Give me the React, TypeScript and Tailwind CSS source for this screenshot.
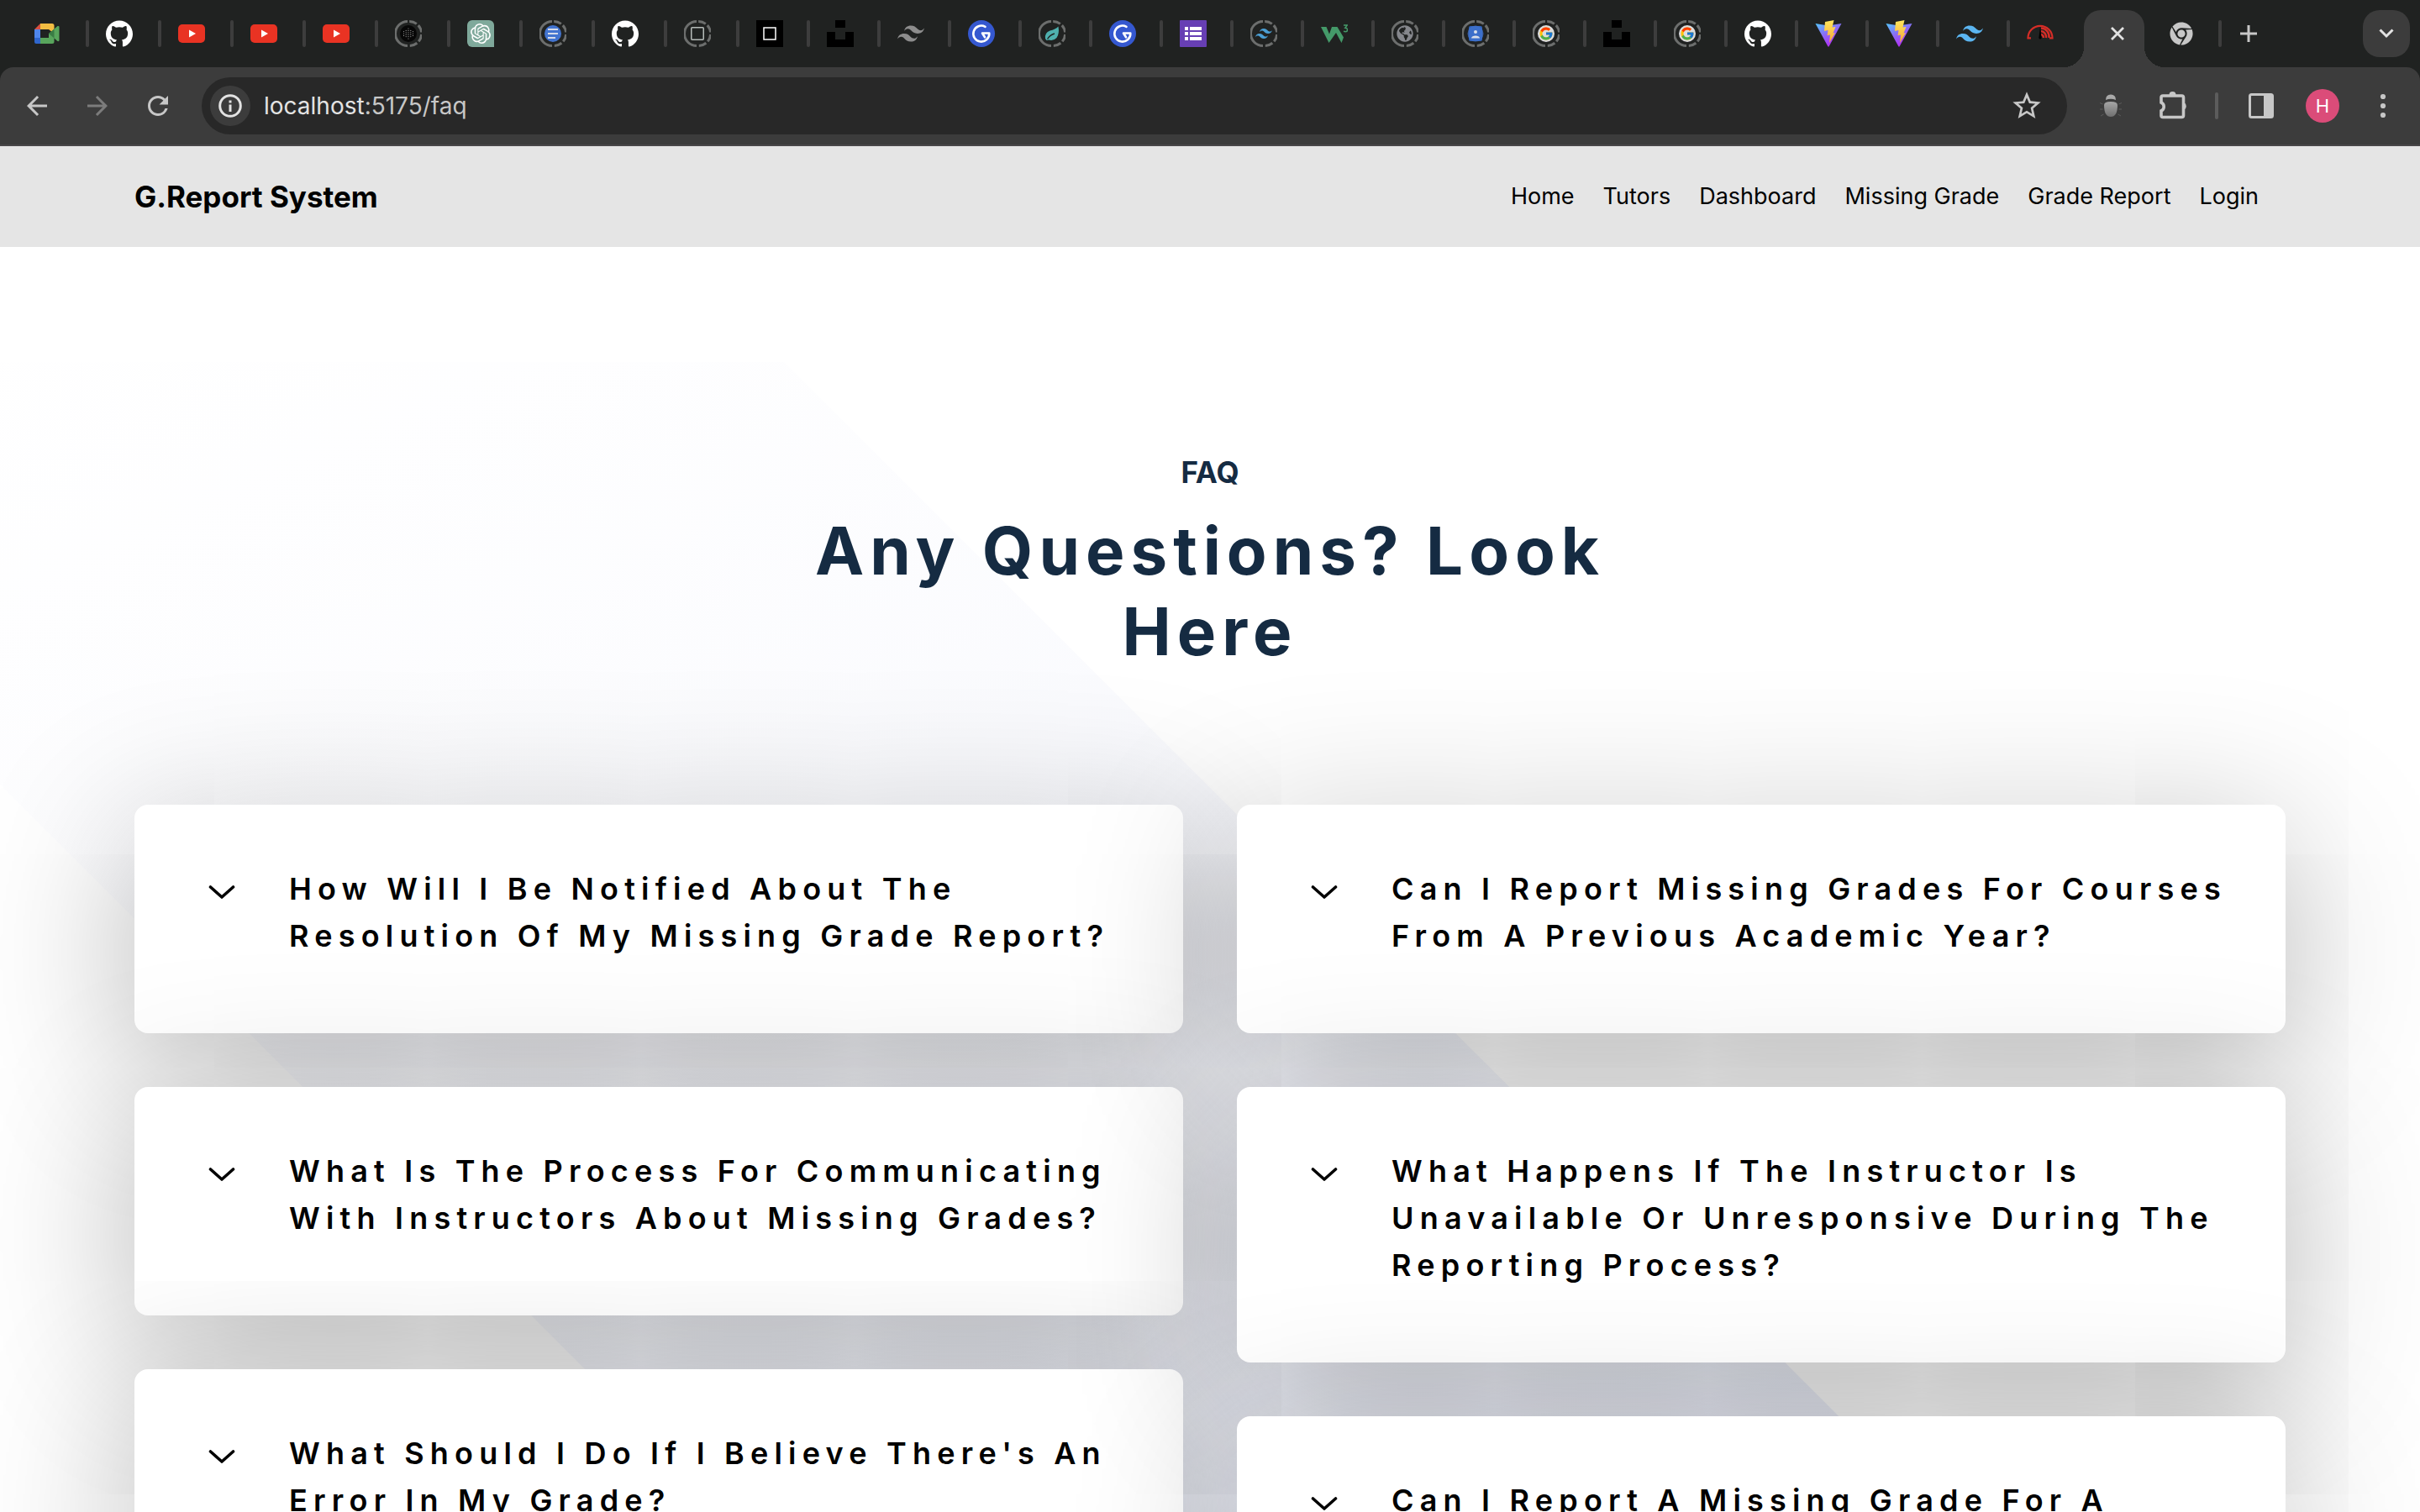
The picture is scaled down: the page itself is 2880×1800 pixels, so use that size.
import { useState } from "react";
import type { ReactNode } from "react";
import { FaChrome, FaGlobeAmericas } from "react-icons/fa";
import { FcGoogle } from "react-icons/fc";
import { MdArrowBack, MdArrowForward, MdRefresh, MdStarBorder } from "react-icons/md";
import { SiGithub, SiOpenai, SiTailwindcss, SiUnsplash } from "react-icons/si";

/* ---------- Favicons ---------- */

function Ring({ children }: { children: ReactNode }) {
  return (
    <span className="relative flex size-8 items-center justify-center">
      <svg viewBox="0 0 32 32" className="absolute inset-0 size-8" fill="none" stroke="#6c6e6d" strokeWidth="3">
        <path d="M15 1.5A14.5 14.5 0 0 0 15 30.5" />
        <path d="M17.2 1.5A14.5 14.5 0 0 1 17.2 30.5" strokeDasharray="9.2 2.6" />
      </svg>
      {children}
    </span>
  );
}

function MeetIcon() {
  return (
    <svg viewBox="0 0 32 32" className="size-8">
      <path d="M1 11 8 4v7Z" fill="#d9503f" />
      <path d="M8 4h14a2.5 2.5 0 0 1 2.5 2.5V16L18 11H8Z" fill="#f3bd42" />
      <path d="M1 11h7v10H1Z" fill="#4f86ec" />
      <path d="M1 21h7v7H3a2 2 0 0 1-2-2Z" fill="#2f66cc" />
      <path d="M8 21h10v-5h6.500v9.500a2.500 2.500 0 0 1-2.500 2.500H8Z" fill="#58a55c" />
      <path d="M18 16 28.500 7q2-.5 2 1v16q0 1.500-2 1Z" fill="#58a55c" />
      <path d="m18 16 6.500-5.500v11Z" fill="#3a7d44" />
    </svg>
  );
}

function YoutubeIcon() {
  return (
    <svg viewBox="0 0 32 32" className="size-8">
      <rect y="5" width="32" height="22" rx="5" fill="#e93323" />
      <path d="m13 11.500 8 4.500-8 4.500Z" fill="#fff" />
    </svg>
  );
}

function DotsIcon() {
  const columns = [
    { x: -5.5, n: 3 },
    { x: -2.8, n: 4 },
    { x: 0, n: 6 },
    { x: 2.8, n: 4 },
    { x: 5.5, n: 3 },
  ];
  return (
    <Ring>
      <svg viewBox="-10 -10 20 20" className="relative size-5">
        <circle r="10" fill="#070707" />
        {columns.map(({ x, n }) =>
          Array.from({ length: n }, (_, i) => (
            <circle key={`${x}-${i}`} cx={x} cy={(i - (n - 1) / 2) * 2.4} r="0.6" fill="#9a9a9a" />
          )),
        )}
      </svg>
    </Ring>
  );
}

function ChatIcon() {
  return (
    <span className="flex size-8 items-center justify-center rounded-md rounded-br-none bg-[#7fa99b]">
      <SiOpenai className="size-6 text-white" />
    </span>
  );
}

function DocsIcon() {
  return (
    <Ring>
      <svg viewBox="0 0 20 20" className="relative size-5">
        <circle cx="10" cy="10" r="10" fill="#4274d0" />
        <path d="M4 5h12M4 10h12M4 15h9" stroke="#d5dcea" strokeWidth="2" />
      </svg>
    </Ring>
  );
}

function SquareRingIcon() {
  return (
    <Ring>
      <svg viewBox="0 0 16 16" className="relative size-4">
        <rect x=".75" y=".75" width="14.500" height="14.500" rx="1" fill="#202322" stroke="#b5bcb9" strokeWidth="1.500" />
      </svg>
    </Ring>
  );
}

function SquareIcon() {
  return (
    <svg viewBox="0 0 32 32" className="size-8">
      <rect width="32" height="32" fill="#000" />
      <rect x="9" y="9" width="14" height="14" fill="none" stroke="#fff" strokeWidth="1.500" />
    </svg>
  );
}

function GIcon() {
  return (
    <svg viewBox="0 0 32 32" className="size-8" fill="none">
      <circle cx="16" cy="16" r="16" fill="#3558d0" />
      <path
        d="M20.500 7.800A9.500 9.500 0 1 0 25.300 15.500H17l3 4.800"
        stroke="#fff"
        strokeWidth="2.600"
        strokeLinecap="round"
        strokeLinejoin="round"
      />
    </svg>
  );
}

function LeafIcon() {
  return (
    <Ring>
      <svg viewBox="0 0 18 18" className="relative size-[18px]">
        <path d="M16.500.5Q18 9 14.500 14 11 18 5 16.500l-2.500.5L1 15Q0 8 6.500 5.500 13 4 16.500.5Z" fill="#4fb0ae" />
        <path d="M3.500 15.500Q6.500 10.500 12 9" fill="none" stroke="#202221" strokeWidth="1.300" />
      </svg>
    </Ring>
  );
}

function FormsIcon() {
  return (
    <svg viewBox="0 0 32 32" className="size-8">
      <rect width="32" height="32" rx="1" fill="#673fb4" />
      <path d="M6 10h4M6 16h4M6 22h4M12 10h14M12 16h14M12 22h14" stroke="#fff" strokeWidth="4" />
    </svg>
  );
}

function SchoolIcon() {
  return (
    <svg viewBox="0 0 32 32" className="size-8" fill="none">
      <path d="M0 8h6.500l3.500 8.500L13 8h6.500l7.500 12.500-2.500 6.500-6.500-12-8.500 12Z" fill="#449a69" />
      <path d="M27 6h4.300l-2.500 3.300q3 .2 2.700 2.700-.5 2.500-4.500 1.300" stroke="#449a69" strokeWidth="1.500" />
    </svg>
  );
}

function ClassroomIcon() {
  return (
    <Ring>
      <svg viewBox="0 0 20 20" className="relative size-5">
        <rect x="2" y="1" width="16" height="18" rx="2" fill="#2f62b8" />
        <circle cx="10" cy="10" r="9.500" fill="#4274d0" fillOpacity=".75" />
        <circle cx="10" cy="8" r="2" fill="#d9dfe9" />
        <path d="M5 15.500c0-4 10-4 10 0Z" fill="#d9dfe9" />
      </svg>
    </Ring>
  );
}

function GoogleIcon() {
  return (
    <Ring>
      <span className="relative flex size-5 items-center justify-center rounded-full bg-[#dcdcdc]">
        <FcGoogle className="size-[18px]" />
      </span>
    </Ring>
  );
}

function ViteIcon() {
  return (
    <svg viewBox="0 0 32 32" className="size-8">
      <defs>
        <linearGradient id="vite-body" x1="0" y1="0" x2="0.6" y2="1">
          <stop offset="0" stopColor="#55c8ff" />
          <stop offset=".5" stopColor="#8a6cf6" />
          <stop offset="1" stopColor="#b52af5" />
        </linearGradient>
        <linearGradient id="vite-bolt" x1="0" y1="0" x2="0" y2="1">
          <stop offset="0" stopColor="#ffe65c" />
          <stop offset="1" stopColor="#f5a73b" />
        </linearGradient>
      </defs>
      <path d="m.5 4 15 2.500L31.500 4 16.500 31.500h-1Z" fill="url(#vite-body)" />
      <path d="M12 2 22.500 0l-2 8.500 4-.5-3 7.500 2.500-.5-7 12 1-9.500-3.500.8 1-6.300-4.500 1Z" fill="url(#vite-bolt)" />
    </svg>
  );
}

function GaugeIcon() {
  return (
    <svg viewBox="0 0 32 32" className="size-8" fill="none" stroke="#d62d27">
      <path d="M5 21.300H1.500A14.500 14.500 0 1 1 30.500 21.300H27" strokeWidth="2.200" />
      <path d="M17 9.500A10 10 0 0 1 26.500 21M17 13a7 7 0 0 1 6 8M17 17q3 1 3 4" strokeWidth="2.400" />
      <path d="m16 8 1.500 12a1.700 1.700 0 1 1-3 0Z" fill="#000" stroke="none" />
    </svg>
  );
}

const github = <SiGithub className="size-8 text-white" />;
const unsplash = <SiUnsplash className="size-8 text-black" />;

const wideTabs: { title: string; icon: ReactNode }[] = [
  { title: "Meet", icon: <MeetIcon /> },
  { title: "GitHub", icon: github },
  { title: "YouTube 1", icon: <YoutubeIcon /> },
  { title: "YouTube 2", icon: <YoutubeIcon /> },
  { title: "YouTube 3", icon: <YoutubeIcon /> },
  { title: "Dots", icon: <DotsIcon /> },
  { title: "ChatGPT", icon: <ChatIcon /> },
  { title: "Docs", icon: <DocsIcon /> },
  { title: "GitHub repository", icon: github },
  { title: "Squares", icon: <SquareRingIcon /> },
];

const narrowTabs: { title: string; icon: ReactNode }[] = [
  { title: "Square", icon: <SquareIcon /> },
  { title: "Unsplash", icon: unsplash },
  { title: "Components", icon: <SiTailwindcss className="size-8 text-[#8d8d8d]" /> },
  { title: "G 1", icon: <GIcon /> },
  { title: "Leaf", icon: <LeafIcon /> },
  { title: "G 2", icon: <GIcon /> },
  { title: "Forms", icon: <FormsIcon /> },
  { title: "Tailwind docs", icon: <Ring><SiTailwindcss className="relative size-5 text-[#4a9fd4]" /></Ring> },
  { title: "W3Schools", icon: <SchoolIcon /> },
  { title: "Site", icon: <Ring><FaGlobeAmericas className="relative size-5 text-[#85878c]" /></Ring> },
  { title: "Classroom", icon: <ClassroomIcon /> },
  { title: "Google search 1", icon: <GoogleIcon /> },
  { title: "Unsplash photos", icon: unsplash },
  { title: "Google search 2", icon: <GoogleIcon /> },
  { title: "GitHub profile", icon: github },
  { title: "Vite app 1", icon: <ViteIcon /> },
  { title: "Vite app 2", icon: <ViteIcon /> },
  { title: "Tailwind CSS", icon: <SiTailwindcss className="size-8 text-[#5bb5f0]" /> },
  { title: "Gauge", icon: <GaugeIcon /> },
];

/* ---------- Browser chrome ---------- */

function Separator() {
  return <span className="h-8 w-1 shrink-0 rounded-sm bg-[#3d3d3d]" />;
}

function TabStrip() {
  return (
    <div className="flex h-20 items-center bg-[#202221] pl-5">
      {wideTabs.map((tab) => (
        <div key={tab.title} className="flex w-[86px] shrink-0 items-center justify-between pl-5">
          <button type="button" aria-label={tab.title}>{tab.icon}</button>
          <Separator />
        </div>
      ))}
      {narrowTabs.map((tab, i) => (
        <div key={tab.title} className="flex w-[84px] shrink-0 items-center justify-between pl-5">
          <button type="button" aria-label={tab.title}>{tab.icon}</button>
          {i < narrowTabs.length - 1 && <Separator />}
        </div>
      ))}
      <div className="relative ml-1 flex h-[68px] w-[72px] shrink-0 items-center justify-center self-end rounded-t-[20px] bg-[#3c3c3c] pb-3 pl-2">
        <span className="absolute right-full bottom-0 size-6 bg-[radial-gradient(circle_at_top_left,transparent_24px,#3c3c3c_24px)]" />
        <span className="absolute bottom-0 left-full size-6 bg-[radial-gradient(circle_at_top_right,transparent_24px,#3c3c3c_24px)]" />
        <button type="button" aria-label="Close tab">
          <svg viewBox="0 0 16 16" className="size-4" stroke="#e3e3e3" strokeWidth="2.800">
            <path d="m1 1 14 14M15 1 1 15" />
          </svg>
        </button>
      </div>
      <div className="flex w-[92px] shrink-0 items-center justify-between pl-[30px]">
        <button type="button" aria-label="Chrome tab"><FaChrome className="size-7 text-[#c7c7c7]" /></button>
        <Separator />
      </div>
      <button type="button" aria-label="New tab" className="ml-[22px]">
        <svg viewBox="0 0 20 20" className="size-5" stroke="#c7c7c7" strokeWidth="3">
          <path d="M10 0v20M0 10h20" />
        </svg>
      </button>
      <button
        type="button"
        aria-label="Search tabs"
        className="mr-3 ml-auto flex size-14 items-center justify-center rounded-[20px] bg-[#3c3c3c]"
      >
        <svg viewBox="0 0 18 12" className="h-3 w-[18px]" fill="none" stroke="#e3e3e3" strokeWidth="3">
          <path d="m1.500 1.500 7.500 7.500 7.500-7.500" />
        </svg>
      </button>
    </div>
  );
}

function Toolbar() {
  return (
    <div className="bg-[#202221]">
      <div className="flex h-[94px] items-center rounded-t-[16px] border-b-2 border-[#484648] bg-[#3c3c3c] pl-[26px] text-[#c7c7c7]">
        <button type="button" aria-label="Back"><MdArrowBack className="size-9" /></button>
        <button type="button" aria-label="Forward" className="ml-9 text-[#7c7c7c]"><MdArrowForward className="size-9" /></button>
        <button type="button" aria-label="Reload" className="ml-9"><MdRefresh className="size-9" /></button>
        <div className="ml-[34px] flex h-[68px] flex-1 items-center rounded-full bg-[#282828] px-2.5">
          <button
            type="button"
            aria-label="Site information"
            className="flex size-12 shrink-0 items-center justify-center rounded-full bg-[#3c3c3c]"
          >
            <svg viewBox="0 0 28 28" className="size-7" fill="none" stroke="#e3e3e3" strokeWidth="3">
              <circle cx="14" cy="14" r="12.300" />
              <path d="M14 12.500V21M14 7.500v3" />
            </svg>
          </button>
          <div className="ml-4 flex-1 text-[28px] leading-10 text-[#c7c7c7]" role="textbox" aria-label="Address">
            <span className="text-[#e3e3e3]">localhost</span>:5175/faq
          </div>
          <button type="button" aria-label="Bookmark this page" className="mr-[18px]">
            <MdStarBorder className="size-10" />
          </button>
        </div>
        <button type="button" aria-label="Debugging extension" className="ml-[38px]">
          <svg viewBox="0 0 28 32" className="h-8 w-7">
            <defs>
              <linearGradient id="bug" x1="0" y1="0" x2="0" y2="1">
                <stop offset="0" stopColor="#a6a6a6" />
                <stop offset="1" stopColor="#707070" />
              </linearGradient>
            </defs>
            <path d="M8 9q0-6.500 6-6.500T20 9q-6-2.500-12 0Z" fill="#a9a9a9" />
            <path d="M6 15q0-4 8-4t8 4q0 14-8 14T6 15Z" fill="url(#bug)" />
            <path d="M4.500 14 1 12.500M4.500 20H1M5.500 26 2 28M23.500 14l3.500-1.500M23.500 20H27M22.500 26l3.500 2" stroke="#5c5c5c" fill="none" />
          </svg>
        </button>
        <button type="button" aria-label="Extensions" className="ml-11">
          <svg viewBox="0 0 34 36" className="h-9 w-[34px]" fill="none">
            <path
              d="M4 6h22.500a2 2 0 0 1 2 2v21.500a2 2 0 0 1-2 2H4a2 2 0 0 1-2-2v-5.500a5.500 5.500 0 0 0 0-10V8a2 2 0 0 1 2-2Z"
              stroke="#c7c7c7"
              strokeWidth="3.600"
            />
            <path d="M11.500 5a4 4 0 0 1 8 0ZM29 14a5 5 0 0 1 0 9Z" fill="#c7c7c7" />
          </svg>
        </button>
        <span className="ml-8 h-8 w-1 rounded-sm bg-[#5c5c5c]" />
        <button type="button" aria-label="Side panel" className="ml-9">
          <svg viewBox="0 0 30 30" className="size-[30px]">
            <rect x="1.500" y="1.500" width="27" height="27" rx="2" fill="none" stroke="#c7c7c7" strokeWidth="3" />
            <path d="M18 1h10v28H18Z" fill="#c7c7c7" />
          </svg>
        </button>
        <button
          type="button"
          aria-label="Profile"
          className="ml-[38px] flex size-10 items-center justify-center rounded-full bg-[#db4c79] text-[22px] text-white"
        >
          H
        </button>
        <button type="button" aria-label="Browser menu" className="mr-10 ml-12">
          <svg viewBox="0 0 8 30" className="h-[30px] w-2" fill="#c7c7c7">
            <circle cx="4" cy="4" r="3.100" />
            <circle cx="4" cy="15" r="3.100" />
            <circle cx="4" cy="26" r="3.100" />
          </svg>
        </button>
      </div>
    </div>
  );
}

/* ---------- Page ---------- */

const links = ["Home", "Tutors", "Dashboard", "Missing Grade", "Grade Report", "Login"];

function NavBar() {
  return (
    <header className="flex h-[120px] items-center justify-between bg-[#e5e5e5] px-40">
      <a href="#home" className="text-[35px] font-bold text-black">G.Report System</a>
      <nav className="flex gap-[34px] pr-8 text-[27px] text-black">
        {links.map((link) => (
          <a key={link} href={`#${link.toLowerCase().replace(" ", "-")}`}>{link}</a>
        ))}
      </nav>
    </header>
  );
}

const answer = "Please contact the registrar's office or your department for details.";

const columns = [
  [
    "How Will I Be Notified About The Resolution Of My Missing Grade Report?",
    "What Is The Process For Communicating With Instructors About Missing Grades?",
    "What Should I Do If I Believe There's An Error In My Grade?",
  ],
  [
    "Can I Report Missing Grades For Courses From A Previous Academic Year?",
    "What Happens If The Instructor Is Unavailable Or Unresponsive During The Reporting Process?",
    "Can I Report A Missing Grade For A Course I Withdrew From?",
  ],
];

function FaqCard({ question }: { question: string }) {
  const [open, setOpen] = useState(false);
  return (
    <div className="mb-16 w-full rounded-2xl bg-white pt-[72px] pr-14 pb-[88px] pl-20 shadow-[0_40px_190px_0_rgba(0,0,0,0.3)]">
      <button type="button" aria-expanded={open} onClick={() => setOpen(!open)} className="flex w-full items-start text-left">
        <span className="mr-14 flex h-16 w-12 shrink-0 items-center justify-center">
          <svg viewBox="0 0 32 16" className="h-4 w-8" fill="none" stroke="#000" strokeWidth="3.600" strokeLinecap="round" strokeLinejoin="round">
            <path d="m2.500 2 13.500 12L29.500 2" />
          </svg>
        </span>
        <span className="text-[36px] leading-[56px] font-semibold tracking-[0.2em] text-black">{question}</span>
      </button>
      {open && <p className="pt-6 pl-[104px] text-[28px] leading-10 text-[#637381]">{answer}</p>}
    </div>
  );
}

function Backdrop() {
  return (
    <svg viewBox="0 0 1440 886" className="absolute top-[137px] right-0 -z-10 w-full" fill="none" aria-hidden="true">
      <path
        opacity="0.5"
        d="M193.307 -273.321L1480.87 1014.240L1121.850 1373.260C1121.850 1373.260 731.745 983.231 478.513 729.927C225.976 477.317 -165.714 85.699 -165.714 85.699L193.307 -273.321Z"
        fill="url(#backdrop-fill)"
      />
      <defs>
        <linearGradient
          id="backdrop-fill"
          x1="1308.650"
          y1="1142.580"
          x2="602.827"
          y2="-418.681"
          gradientUnits="userSpaceOnUse"
        >
          <stop stopColor="#3056D3" stopOpacity="0.36" />
          <stop offset="1" stopColor="#F5F2FD" stopOpacity="0" />
          <stop offset="1" stopColor="#F5F2FD" stopOpacity="0.096" />
        </linearGradient>
      </defs>
    </svg>
  );
}

export default function App() {
  return (
    <div className="flex h-screen flex-col overflow-hidden bg-white font-['Inter','Liberation_Sans',sans-serif]">
      <TabStrip />
      <Toolbar />
      <main className="min-h-0 flex-1 overflow-hidden">
        <NavBar />
        <section className="relative isolate overflow-hidden px-40 pt-60 pb-32">
          <Backdrop />
          <div className="mx-auto mb-[158px] max-w-[1020px] text-center text-[#152b42]">
            <span className="mb-[18px] block text-[35px] leading-[56px] font-bold">FAQ</span>
            <h2 className="text-[78px] leading-[96px] font-bold tracking-[7px]">Any Questions? Look Here</h2>
          </div>
          <div className="grid grid-cols-2 gap-x-16">
            {columns.map((questions) => (
              <div key={questions[0]}>
                {questions.map((question) => (
                  <FaqCard key={question} question={question} />
                ))}
              </div>
            ))}
          </div>
        </section>
      </main>
    </div>
  );
}
